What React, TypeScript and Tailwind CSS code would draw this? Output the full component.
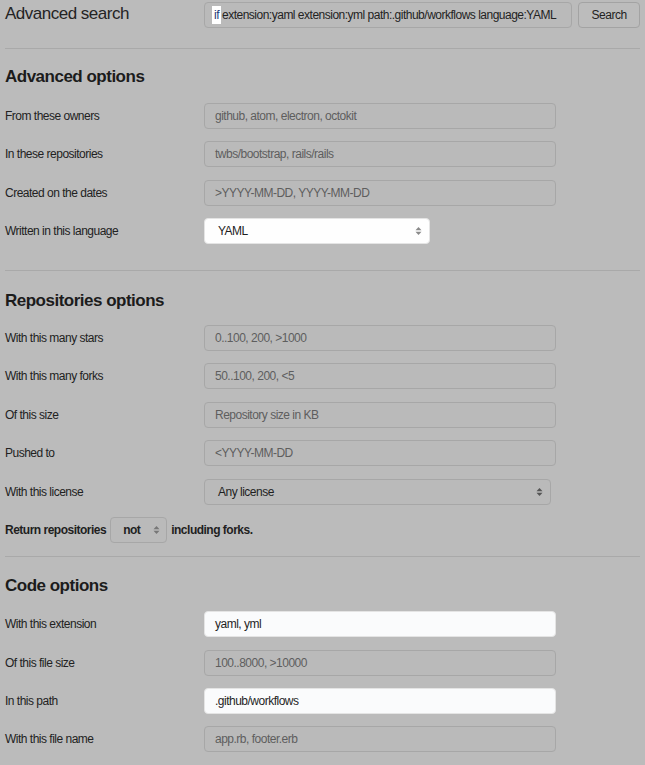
import React from 'react';

// up/down caret used by the select boxes
const Caret: React.FC<{ color?: string }> = ({ color = '#6b6b6b' }) => (
  <svg width="7" height="10" viewBox="0 0 7 10" className="shrink-0">
    <path d="M3.5 1 L6.5 4.3 H0.5 Z" fill={color} />
    <path d="M3.5 9 L6.5 5.7 H0.5 Z" fill={color} />
  </svg>
);

interface FieldProps {
  label: string;
  text: string;
  active?: boolean;
}

const TextRow: React.FC<FieldProps> = ({ label, text, active = false }) => (
  <div className="flex items-center h-[26px]">
    <span className="w-[199px] shrink-0 text-[12px] text-[#222]">{label}</span>
    <div
      className={`w-[352px] h-[26px] flex items-center px-[10px] rounded-[4px] border text-[12px] ${
        active
          ? 'bg-[#fafbfc] border-[#e4e4e4] text-[#1f1f1f]'
          : 'bg-[#bababa] border-[#a7a7a7] text-[#5e5e5e]'
      }`}
    >
      {text}
    </div>
  </div>
);

const SelectRow: React.FC<FieldProps & { width: string }> = ({ label, text, active = false, width }) => (
  <div className="flex items-center h-[26px]">
    <span className="w-[199px] shrink-0 text-[12px] text-[#222]">{label}</span>
    <div
      className={`${width} h-[26px] flex items-center justify-between pl-[13px] pr-[7px] rounded-[4px] border text-[12px] text-[#1f1f1f] ${
        active ? 'bg-[#fefefe] border-[#e4e4e4]' : 'bg-[#bababa] border-[#a7a7a7]'
      }`}
    >
      <span>{text}</span>
      <Caret color={active ? '#8a8a8a' : '#555'} />
    </div>
  </div>
);

const Heading: React.FC<{ children: React.ReactNode }> = ({ children }) => (
  <h2 className="text-[17px] leading-[22px] font-bold tracking-[-0.5px] text-[#1c1c1c]">{children}</h2>
);

const Divider: React.FC = () => <div className="h-px bg-[#a9a9a9]" />;

export default function App() {
  return (
    <div
      className="min-h-[765px] bg-[#bbbbbb] px-[5px] pt-[2px] tracking-[-0.5px]"
      style={{ fontFamily: '"Liberation Sans", Arial, sans-serif' }}
    >
      {/* Top search bar */}
      <div className="flex items-center h-[26px]">
        <span className="w-[199px] shrink-0 text-[17px] text-[#242424] -mt-[2px]">Advanced search</span>
        <div className="w-[369px] h-[26px] flex items-center pl-[7px] rounded-[4px] border border-[#a7a7a7] bg-[#bababa] text-[12px] text-[#232323] whitespace-nowrap overflow-hidden">
          <span className="bg-white text-[#1d3a7a] px-[2px] leading-[18px]">if</span>
          <span className="ml-[1px]">extension:yaml extension:yml path:.github/workflows language:YAML</span>
        </div>
        <div className="ml-[6px] w-[62px] h-[26px] flex items-center justify-center rounded-[4px] border border-[#a3a3a3] bg-[#bcbcbc] text-[12px] text-[#222]">
          Search
        </div>
      </div>

      <div className="mt-[20px]">
        <Divider />
      </div>

      {/* Advanced options */}
      <div className="mt-[17px]">
        <Heading>Advanced options</Heading>
      </div>
      <div className="mt-[15px] flex flex-col gap-[12.3px]">
        <TextRow label="From these owners" text="github, atom, electron, octokit" />
        <TextRow label="In these repositories" text="twbs/bootstrap, rails/rails" />
        <TextRow label="Created on the dates" text=">YYYY-MM-DD, YYYY-MM-DD" />
        <SelectRow label="Written in this language" text="YAML" active width="w-[226px]" />
      </div>

      <div className="mt-[26px]">
        <Divider />
      </div>

      {/* Repositories options */}
      <div className="mt-[19px]">
        <Heading>Repositories options</Heading>
      </div>
      <div className="mt-[13px] flex flex-col gap-[12.5px]">
        <TextRow label="With this many stars" text="0..100, 200, >1000" />
        <TextRow label="With this many forks" text="50..100, 200, <5" />
        <TextRow label="Of this size" text="Repository size in KB" />
        <TextRow label="Pushed to" text="<YYYY-MM-DD" />
        <SelectRow label="With this license" text="Any license" width="w-[347px]" />
        <div className="flex items-center h-[26px] text-[12px] font-bold text-[#1f1f1f]">
          <span>Return repositories</span>
          <div className="mx-[4px] w-[57px] h-[26px] flex items-center justify-between pl-[12px] pr-[6px] rounded-[4px] border border-[#a7a7a7] bg-[#bababa]">
            <span>not</span>
            <Caret color="#777" />
          </div>
          <span>including forks.</span>
        </div>
      </div>

      <div className="mt-[13px]">
        <Divider />
      </div>

      {/* Code options */}
      <div className="mt-[18px]">
        <Heading>Code options</Heading>
      </div>
      <div className="mt-[14px] flex flex-col gap-[12.3px]">
        <TextRow label="With this extension" text="yaml, yml" active />
        <TextRow label="Of this file size" text="100..8000, >10000" />
        <TextRow label="In this path" text=".github/workflows" active />
        <TextRow label="With this file name" text="app.rb, footer.erb" />
      </div>
    </div>
  );
}
